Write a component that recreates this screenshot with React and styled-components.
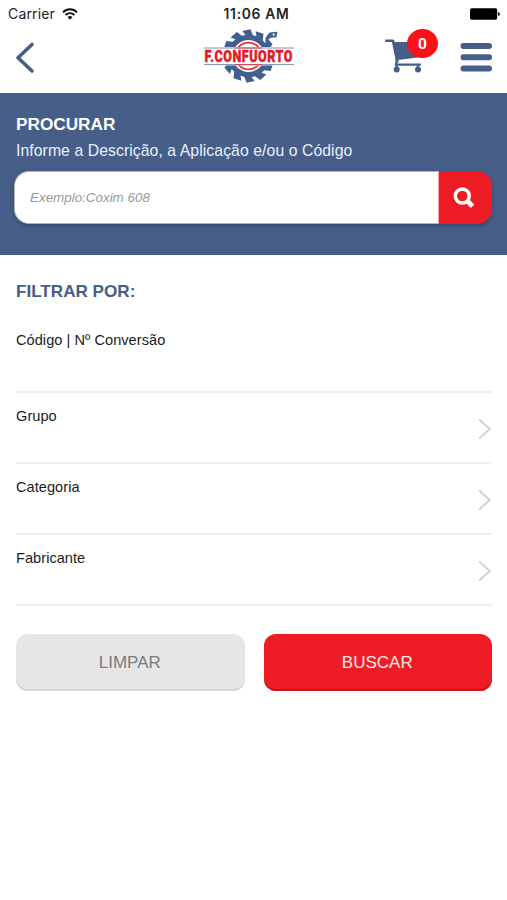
import React from 'react';
import styled, { createGlobalStyle } from 'styled-components';

const BLUE = '#475e88';
const RED = '#ee1c25';

const GlobalStyle = createGlobalStyle`
  * { box-sizing: border-box; }
  body { margin: 0; background: #fff; }
  button, input { font-family: inherit; border: 0; margin: 0; padding: 0; }
  svg { display: block; }
`;

const Screen = styled.div`
  width: 507px;
  height: 900px;
  overflow: hidden;
  background: #fff;
  font-family: "Liberation Sans", Arial, sans-serif;
  color: #1c1c1c;
`;

const StatusBar = styled.div`
  height: 27px;
  padding: 0 7px 0 8px;
  display: grid;
  grid-template-columns: 1fr auto 1fr;
  align-items: center;
  font-family: Inter, sans-serif;
  font-size: 14px;
  color: #222;
`;

const Carrier = styled.div`
  display: flex;
  align-items: center;
  gap: 7px;
  letter-spacing: 0.15px;
`;

const Clock = styled.div`
  font-weight: 600;
  font-size: 13.8px;
  letter-spacing: 0.7px;
  padding-left: 5px;
`;

const Battery = styled.div`
  justify-self: end;
`;

const Header = styled.header`
  height: 66px;
  padding: 0 14px 0 15px;
  display: grid;
  grid-template-columns: 188px 92px 1fr;
  align-items: start;
`;

const LogoMark = styled.svg`
  overflow: visible;
`;

const IconButton = styled.button`
  background: none;
  display: block;
`;

const BackButton = styled(IconButton)`
  margin-top: 14px;
`;

const Actions = styled.div`
  display: flex;
  justify-content: flex-end;
  align-items: flex-start;
`;

const CartButton = styled(IconButton)`
  position: relative;
  width: 54px;
  height: 48px;
  margin-right: 22px;
`;

const Badge = styled.span`
  position: absolute;
  top: 2px;
  right: 0;
  width: 31px;
  height: 29px;
  border-radius: 50%;
  background: #fb1118;
  color: #fff;
  font: bold 15.5px/30px Roboto, sans-serif;
  text-align: center;
`;

const MenuButton = styled(IconButton)`
  margin-top: 15px;
`;

const SearchPanel = styled.section`
  height: 162px;
  background: ${BLUE};
  padding: 21px 15px 0 14px;
  color: #fff;
`;

const PanelTitle = styled.h1`
  margin: 0 0 0 2px;
  font-size: 17.2px;
  line-height: 20px;
`;

const PanelHint = styled.p`
  margin: 7px 0 0 2px;
  font-size: 15.75px;
  letter-spacing: 0.08px;
  line-height: 20px;
  color: #e8f0ff;
  white-space: nowrap;
`;

const SearchBox = styled.form`
  margin-top: 10px;
  height: 53px;
  display: flex;
  border-radius: 15px;
  box-shadow: 0 2px 4px rgba(30, 45, 70, 0.45);
`;

const SearchInput = styled.input`
  flex: 1;
  min-width: 0;
  padding-left: 15px;
  background: #fff;
  border: 1px solid #b3b3b3;
  border-right: 0;
  border-radius: 15px 0 0 15px;
  font-size: 13.4px;
  outline: 0;
  &::placeholder {
    color: #999;
    font-style: italic;
    opacity: 1;
  }
`;

const SearchButton = styled.button`
  width: 54px;
  display: flex;
  align-items: center;
  justify-content: center;
  padding-right: 3px;
  background: ${RED};
  border-left: 1px solid #f2a5a8;
  border-radius: 0 15px 15px 0;
`;

const Filters = styled.section`
  padding: 27px 15px 0 16px;
`;

const FilterTitle = styled.h2`
  margin: 0;
  font-size: 17.1px;
  line-height: 20px;
  color: ${BLUE};
`;

const FilterRow = styled.div`
  height: ${(p) => (p.$first ? 91 : 71)}px;
  padding-top: ${(p) => (p.$first ? 29 : 14)}px;
  border-bottom: 2px solid #efefef;
  display: flex;
  justify-content: space-between;
  align-items: flex-start;
  font-size: 14.6px;
  letter-spacing: 0.03px;
  line-height: 18px;
`;

const Chevron = styled.svg`
  margin-top: 11px;
`;

const ButtonRow = styled.div`
  margin-top: 28px;
  display: grid;
  grid-template-columns: 1fr 1fr;
  gap: 19px;
`;

const ActionButton = styled.button`
  height: 57px;
  padding-right: 1px;
  border-radius: 12px;
  font-size: 17px;
  background: ${(p) => (p.$primary ? RED : '#e6e6e6')};
  color: ${(p) => (p.$primary ? '#ffe9ea' : '#7b7b7b')};
  box-shadow: inset 0 -2px 0 ${(p) => (p.$primary ? '#c4141c' : '#d5d5d5')};
`;

const TEETH = 12;
const polar = (r, deg) => {
  const a = (deg * Math.PI) / 180;
  return `${(248.5 + r * Math.cos(a)).toFixed(2)},${(56 + r * Math.sin(a)).toFixed(2)}`;
};
const gearPoints = Array.from({ length: TEETH }, (_, i) => {
  const a = (i * 360) / TEETH - 90;
  return [polar(21.3, a - 8), polar(25.8, a - 14), polar(26.8, a + 4), polar(21.3, a + 12)].join(' ');
}).join(' ');

const Logo = () => (
  <LogoMark width="92" height="56" viewBox="203 27 92 56" role="img" aria-label="F.Confuorto">
    <polygon points={gearPoints} fill="#435f90" />
    <circle cx="248.5" cy="56" r="16" fill="#fff" />
    <circle cx="248.5" cy="56" r="13.4" fill="none" stroke="#e5343c" strokeWidth="1.8" />
    <path d="M266 37 L269.5 32.5 L277.5 31.8 L276.5 37.3 L271 37.8 L265 41.5 Z" fill="#435f90" />
    <circle cx="273.7" cy="34.6" r="1.1" fill="#fff" />
    <rect x="203" y="47" width="92" height="18.4" fill="#fff" />
    <path d="M204 48H294M204 64.6H294" stroke="#7f91b8" strokeWidth="1" />
    <path d="M235 48H262M235 64.6H262" stroke="#e5343c" strokeWidth="0.9" />
    <text
      transform="translate(204.5 62.2) scale(1 1.36)"
      textLength="88.5"
      lengthAdjust="spacingAndGlyphs"
      letterSpacing="0.5"
      fontFamily="Roboto, sans-serif"
      fontWeight="900"
      fontSize="12"
      fill="#e31b23"
      stroke="#e31b23"
      strokeWidth="0.3"
    >
      F.CONFUORTO
    </text>
  </LogoMark>
);

const WifiIcon = () => (
  <svg width="16" height="12" viewBox="0 0 16 12" fill="none" stroke="#111" strokeWidth="1.9">
    <path d="M1 4.3C5 0.3 11 0.3 15 4.3" />
    <path d="M3.6 7C6.2 4.5 9.8 4.5 12.4 7" />
    <path d="M5.5 9Q8 7 10.5 9L8 11.7Z" fill="#111" stroke="none" />
  </svg>
);

const BatteryIcon = () => (
  <svg width="31" height="12" viewBox="0 0 31 12">
    <rect x="1" y="0.3" width="27.2" height="11.4" rx="1.8" fill="#000" />
    <path d="M29 4Q31 4.4 31 6T29 8Z" fill="#222" />
  </svg>
);

const BackIcon = () => (
  <svg width="20" height="33" viewBox="0 0 20 33">
    <path d="M17 3.5L3 16.8L17 30" fill="none" stroke={BLUE} strokeWidth="3.6" strokeLinecap="round" strokeLinejoin="round" />
  </svg>
);

const CartIcon = () => (
  <svg width="54" height="48" viewBox="384 27 54 48" fill={BLUE}>
    <path d="M386.2 40.8H393L397.2 61.5" fill="none" stroke={BLUE} strokeWidth="2.6" strokeLinecap="round" strokeLinejoin="round" />
    <path d="M393 42H423L419.5 57.2L396 60.3Z" />
    <path d="M397 60L395.8 64.7H420" fill="none" stroke={BLUE} strokeWidth="2.2" strokeLinecap="round" strokeLinejoin="round" />
    <circle cx="396.7" cy="69.6" r="3" />
    <circle cx="418" cy="69.6" r="3" />
    <path d="M396.7 65V69M418 65V69" stroke={BLUE} strokeWidth="2.4" />
  </svg>
);

const MenuIcon = () => (
  <svg width="33" height="31" viewBox="0 0 33 31">
    <path d="M3.5 4H29M3.5 15.2H29M3.5 26.4H29" stroke={BLUE} strokeWidth="6" strokeLinecap="round" />
  </svg>
);

const SearchIcon = () => (
  <svg width="22" height="22" viewBox="0 0 22 22" fill="none" stroke="#fff">
    <circle cx="9.3" cy="9" r="7" strokeWidth="3.4" />
    <path d="M13.8 13.5L19.6 19.2" strokeWidth="4.8" />
  </svg>
);

const ArrowRight = () => (
  <Chevron width="14" height="22" viewBox="0 0 14 22">
    <path d="M1.2 1.5L11.7 11L1.2 20.5" fill="none" stroke="#d0d0d0" strokeWidth="1.8" />
  </Chevron>
);

export default function App() {
  return (
    <Screen>
      <GlobalStyle />
      <StatusBar>
        <Carrier>
          Carrier
          <WifiIcon />
        </Carrier>
        <Clock>11:06 AM</Clock>
        <Battery>
          <BatteryIcon />
        </Battery>
      </StatusBar>
      <Header>
        <BackButton aria-label="Voltar">
          <BackIcon />
        </BackButton>
        <Logo />
        <Actions>
          <CartButton aria-label="Carrinho">
            <CartIcon />
            <Badge>0</Badge>
          </CartButton>
          <MenuButton aria-label="Menu">
            <MenuIcon />
          </MenuButton>
        </Actions>
      </Header>
      <SearchPanel>
        <PanelTitle>PROCURAR</PanelTitle>
        <PanelHint>Informe a Descrição, a Aplicação e/ou o Código</PanelHint>
        <SearchBox>
          <SearchInput placeholder="Exemplo:Coxim 608" />
          <SearchButton type="button" aria-label="Procurar">
            <SearchIcon />
          </SearchButton>
        </SearchBox>
      </SearchPanel>
      <Filters>
        <FilterTitle>FILTRAR POR:</FilterTitle>
        <FilterRow $first>Código | Nº Conversão</FilterRow>
        {['Grupo', 'Categoria', 'Fabricante'].map((label) => (
          <FilterRow key={label}>
            {label}
            <ArrowRight />
          </FilterRow>
        ))}
        <ButtonRow>
          <ActionButton>LIMPAR</ActionButton>
          <ActionButton $primary>BUSCAR</ActionButton>
        </ButtonRow>
      </Filters>
    </Screen>
  );
}
